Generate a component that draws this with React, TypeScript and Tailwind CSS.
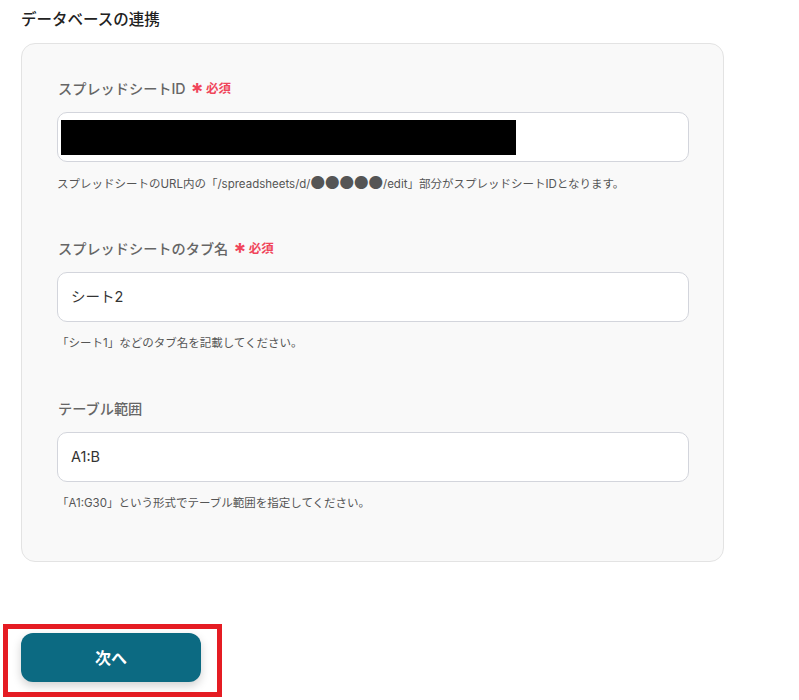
// Database link settings form
const Dots = () => (
  <span className="text-[14.5px] leading-none" style={{ fontFamily: '"Noto Sans CJK JP", sans-serif' }}>
    ●●●●●
  </span>
)

const fields = [
  {
    label: 'スプレッドシートID',
    required: true,
    value: '',
    redacted: true,
    help: (
      <>
        スプレッドシートのURL内の「/spreadsheets/d/<Dots />/edit」部分がスプレッドシートIDとなります。
      </>
    ),
  },
  {
    label: 'スプレッドシートのタブ名',
    required: true,
    value: 'シート2',
    redacted: false,
    help: '「シート1」などのタブ名を記載してください。',
  },
  {
    label: 'テーブル範囲',
    required: false,
    value: 'A1:B',
    redacted: false,
    help: '「A1:G30」という形式でテーブル範囲を指定してください。',
  },
]

export default function App() {
  return (
    <div
      className="w-[799px] h-[700px] bg-white overflow-hidden pl-[21px] pt-[10px]"
      style={{ fontFamily: 'Inter, "Noto Sans CJK JP", sans-serif' }}
    >
      <h2 className="text-[15.5px] leading-5 font-medium text-[#222]">データベースの連携</h2>

      {/* Panel */}
      <div className="mt-[13px] w-[703px] rounded-[14px] border border-[#e3e3e3] bg-[#f9f9f9] pl-[35px] pr-[34px] pt-[35px] pb-[50px] flex flex-col gap-[48px]">
        {fields.map((f) => (
          <div key={f.label} className="flex flex-col">
            <div className="flex items-center h-5 leading-5 pl-px">
              <span className="text-[14.2px] font-medium text-[#666]">{f.label}</span>
              {f.required && (
                <span className="ml-[5px] flex items-center h-5 text-[12.5px] font-bold text-[#f0455a]">
                  <span className="inline-block text-[24px] leading-5 translate-y-[4px] mr-[2px]">*</span>
                  必須
                </span>
              )}
            </div>
            <div className="mt-[13px] h-[50px] rounded-[10px] border border-[#d3d5dc] bg-white flex items-center pl-[3px]">
              {f.redacted ? (
                <div className="w-[455px] h-[35px] bg-black" />
              ) : (
                <span className="pl-[10px] text-[14.5px] text-[#333]">{f.value}</span>
              )}
            </div>
            <p className="mt-[13px] h-4 text-[11.5px] leading-4 text-[#555]">{f.help}</p>
          </div>
        ))}
      </div>

      {/* Next button, highlighted */}
      <div className="mt-[62px] -ml-[18px] w-[219px] border-[5px] border-[#e51c23] pt-[4px] pb-[10px] pl-[13px]">
        <button className="w-[180px] h-[49px] rounded-[12px] bg-[#0c6a82] text-white text-[16px] font-bold shadow-[0_4px_10px_rgba(0,0,0,0.18)]">
          次へ
        </button>
      </div>
    </div>
  )
}
